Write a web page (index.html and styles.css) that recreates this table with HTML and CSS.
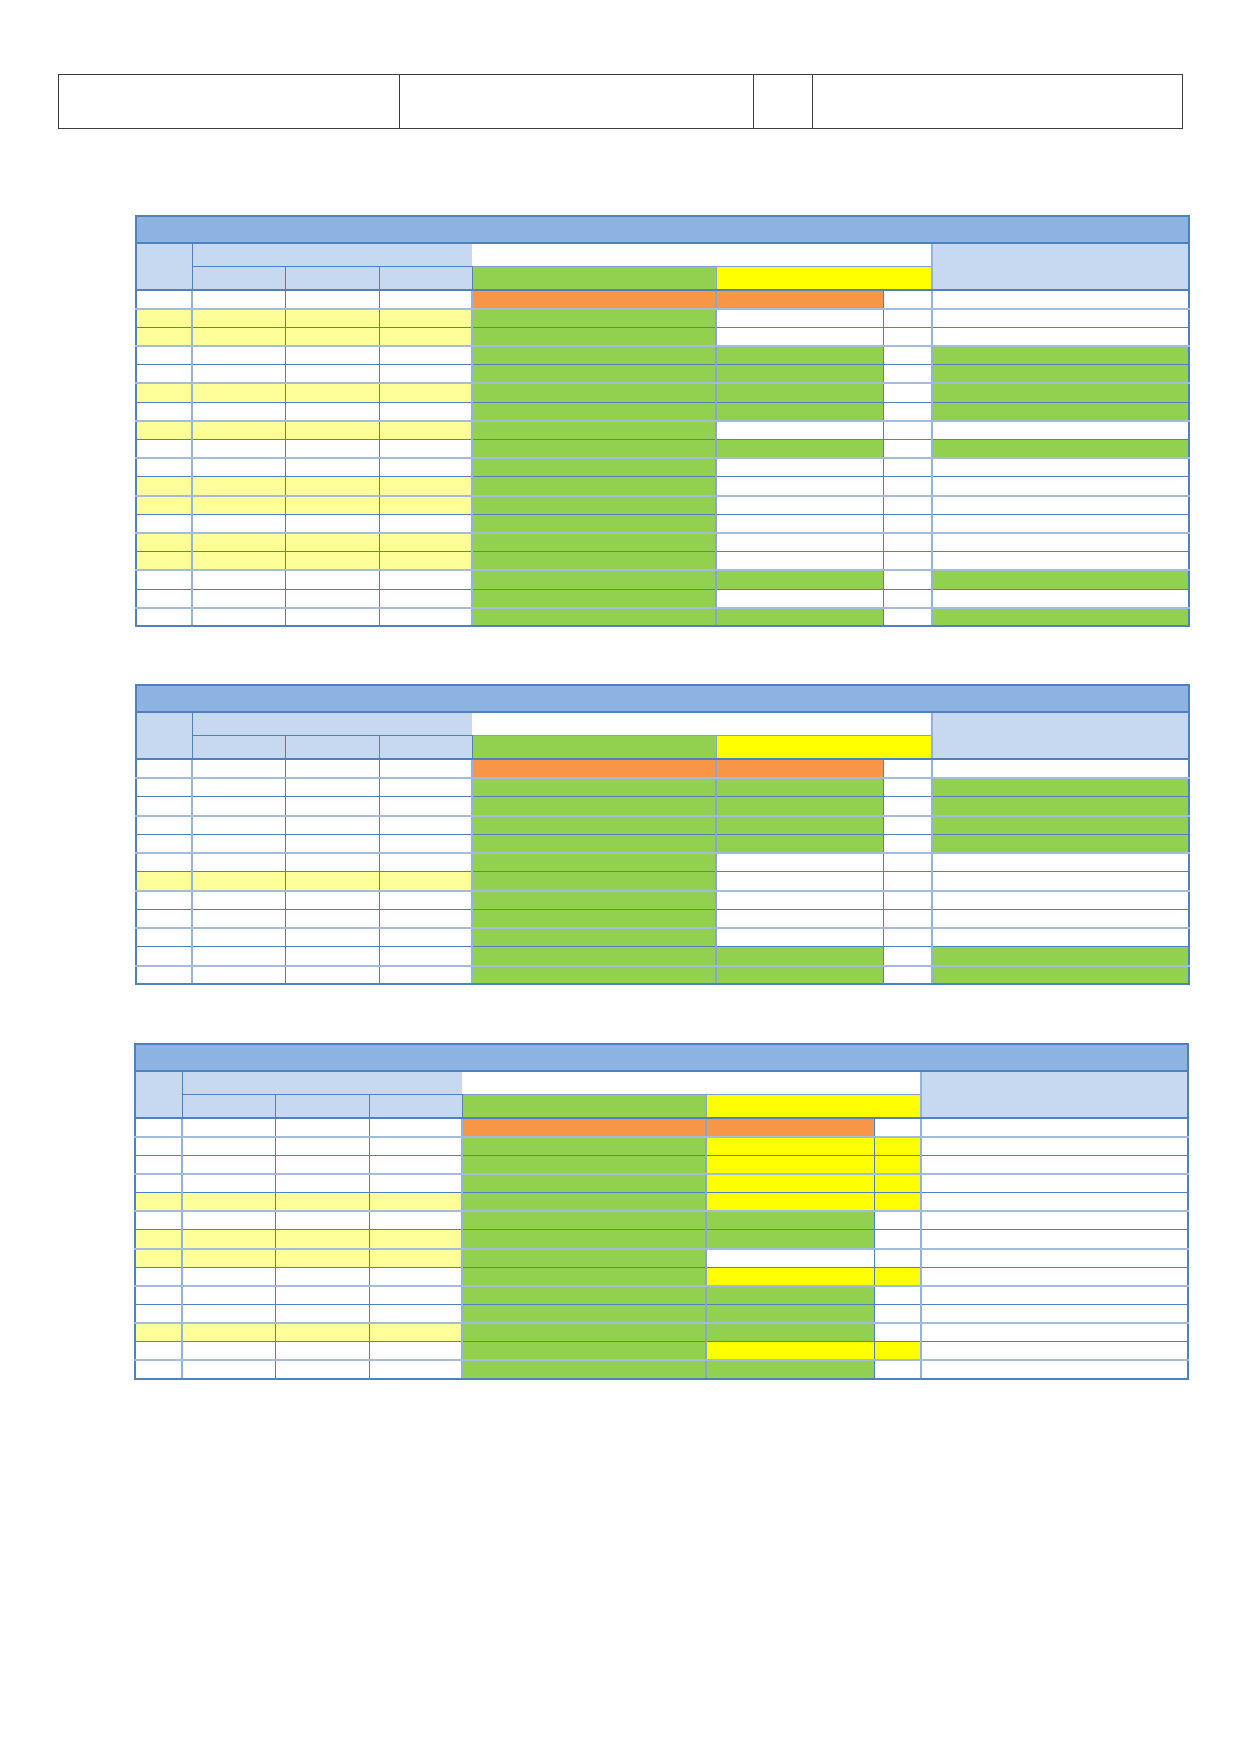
FILE: index.html
```html
<!DOCTYPE html>
<html lang="en">
<head>
<meta charset="utf-8">
<title>Schedule</title>
<link rel="stylesheet" href="styles.css">
</head>
<body>
<div class="page">
  <table class="doc-head">
    <colgroup><col class="d1"><col class="d2"><col class="d3"><col class="d4"></colgroup>
    <tr><td></td><td></td><td></td><td></td></tr>
  </table>

  <table class="grid t1">
    <colgroup><col class="a1"><col class="a2"><col class="a3"><col class="a4"><col class="a5"><col class="a6"><col class="a7"><col class="a8"></colgroup>
    <thead>
      <tr class="title"><th colspan="8"></th></tr>
      <tr class="hr1"><th rowspan="2" class="lb first"></th><th colspan="3" class="lb grp"></th><th colspan="3" class="wh"></th><th rowspan="2" class="lb last"></th></tr>
      <tr class="hr2"><th class="lb sub"></th><th class="lb sub"></th><th class="lb sub"></th><th class="gr"></th><th colspan="2" class="ye"></th></tr>
    </thead>
    <tbody>
      <tr><td></td><td></td><td></td><td></td><td class="or"></td><td class="or"></td><td></td><td></td></tr>
      <tr class="ly"><td></td><td></td><td></td><td></td><td class="gr"></td><td></td><td></td><td></td></tr>
      <tr class="ly"><td></td><td></td><td></td><td></td><td class="gr"></td><td></td><td></td><td></td></tr>
      <tr><td></td><td></td><td></td><td></td><td class="gr"></td><td class="gr"></td><td></td><td class="gr"></td></tr>
      <tr><td></td><td></td><td></td><td></td><td class="gr"></td><td class="gr"></td><td></td><td class="gr"></td></tr>
      <tr class="ly"><td></td><td></td><td></td><td></td><td class="gr"></td><td class="gr"></td><td></td><td class="gr"></td></tr>
      <tr><td></td><td></td><td></td><td></td><td class="gr"></td><td class="gr"></td><td></td><td class="gr"></td></tr>
      <tr class="ly"><td></td><td></td><td></td><td></td><td class="gr"></td><td></td><td></td><td></td></tr>
      <tr><td></td><td></td><td></td><td></td><td class="gr"></td><td class="gr"></td><td></td><td class="gr"></td></tr>
      <tr><td></td><td></td><td></td><td></td><td class="gr"></td><td></td><td></td><td></td></tr>
      <tr class="ly"><td></td><td></td><td></td><td></td><td class="gr"></td><td></td><td></td><td></td></tr>
      <tr class="ly"><td></td><td></td><td></td><td></td><td class="gr"></td><td></td><td></td><td></td></tr>
      <tr><td></td><td></td><td></td><td></td><td class="gr"></td><td></td><td></td><td></td></tr>
      <tr class="ly"><td></td><td></td><td></td><td></td><td class="gr"></td><td></td><td></td><td></td></tr>
      <tr class="ly"><td></td><td></td><td></td><td></td><td class="gr"></td><td></td><td></td><td></td></tr>
      <tr><td></td><td></td><td></td><td></td><td class="gr"></td><td class="gr"></td><td></td><td class="gr"></td></tr>
      <tr><td></td><td></td><td></td><td></td><td class="gr"></td><td></td><td></td><td></td></tr>
      <tr><td></td><td></td><td></td><td></td><td class="gr"></td><td class="gr"></td><td></td><td class="gr"></td></tr>
    </tbody>
  </table>

  <table class="grid t2">
    <colgroup><col class="a1"><col class="a2"><col class="a3"><col class="a4"><col class="a5"><col class="a6"><col class="a7"><col class="a8"></colgroup>
    <thead>
      <tr class="title"><th colspan="8"></th></tr>
      <tr class="hr1"><th rowspan="2" class="lb first"></th><th colspan="3" class="lb grp"></th><th colspan="3" class="wh"></th><th rowspan="2" class="lb last"></th></tr>
      <tr class="hr2"><th class="lb sub"></th><th class="lb sub"></th><th class="lb sub"></th><th class="gr"></th><th colspan="2" class="ye"></th></tr>
    </thead>
    <tbody>
      <tr><td></td><td></td><td></td><td></td><td class="or"></td><td class="or"></td><td></td><td></td></tr>
      <tr><td></td><td></td><td></td><td></td><td class="gr"></td><td class="gr"></td><td></td><td class="gr"></td></tr>
      <tr><td></td><td></td><td></td><td></td><td class="gr"></td><td class="gr"></td><td></td><td class="gr"></td></tr>
      <tr><td></td><td></td><td></td><td></td><td class="gr"></td><td class="gr"></td><td></td><td class="gr"></td></tr>
      <tr><td></td><td></td><td></td><td></td><td class="gr"></td><td class="gr"></td><td></td><td class="gr"></td></tr>
      <tr><td></td><td></td><td></td><td></td><td class="gr"></td><td></td><td></td><td></td></tr>
      <tr class="ly"><td></td><td></td><td></td><td></td><td class="gr"></td><td></td><td></td><td></td></tr>
      <tr><td></td><td></td><td></td><td></td><td class="gr"></td><td></td><td></td><td></td></tr>
      <tr><td></td><td></td><td></td><td></td><td class="gr"></td><td></td><td></td><td></td></tr>
      <tr><td></td><td></td><td></td><td></td><td class="gr"></td><td></td><td></td><td></td></tr>
      <tr><td></td><td></td><td></td><td></td><td class="gr"></td><td class="gr"></td><td></td><td class="gr"></td></tr>
      <tr><td></td><td></td><td></td><td></td><td class="gr"></td><td class="gr"></td><td></td><td class="gr"></td></tr>
    </tbody>
  </table>

  <table class="grid t3">
    <colgroup><col class="b1"><col class="b2"><col class="b3"><col class="b4"><col class="b5"><col class="b6"><col class="b7"><col class="b8"></colgroup>
    <thead>
      <tr class="title"><th colspan="8"></th></tr>
      <tr class="hr1"><th rowspan="2" class="lb first"></th><th colspan="3" class="lb grp"></th><th colspan="3" class="wh"></th><th rowspan="2" class="lb last"></th></tr>
      <tr class="hr2"><th class="lb sub"></th><th class="lb sub"></th><th class="lb sub"></th><th class="gr"></th><th colspan="2" class="ye"></th></tr>
    </thead>
    <tbody>
      <tr><td></td><td></td><td></td><td></td><td class="or"></td><td class="or"></td><td></td><td></td></tr>
      <tr><td></td><td></td><td></td><td></td><td class="gr"></td><td class="ye"></td><td class="ye"></td><td></td></tr>
      <tr><td></td><td></td><td></td><td></td><td class="gr"></td><td class="ye"></td><td class="ye"></td><td></td></tr>
      <tr><td></td><td></td><td></td><td></td><td class="gr"></td><td class="ye"></td><td class="ye"></td><td></td></tr>
      <tr class="ly"><td></td><td></td><td></td><td></td><td class="gr"></td><td class="ye"></td><td class="ye"></td><td></td></tr>
      <tr><td></td><td></td><td></td><td></td><td class="gr"></td><td class="gr"></td><td></td><td></td></tr>
      <tr class="ly"><td></td><td></td><td></td><td></td><td class="gr"></td><td class="gr"></td><td></td><td></td></tr>
      <tr class="ly"><td></td><td></td><td></td><td></td><td class="gr"></td><td></td><td></td><td></td></tr>
      <tr><td></td><td></td><td></td><td></td><td class="gr"></td><td class="ye"></td><td class="ye"></td><td></td></tr>
      <tr><td></td><td></td><td></td><td></td><td class="gr"></td><td class="gr"></td><td></td><td></td></tr>
      <tr><td></td><td></td><td></td><td></td><td class="gr"></td><td class="gr"></td><td></td><td></td></tr>
      <tr class="ly"><td></td><td></td><td></td><td></td><td class="gr"></td><td class="gr"></td><td></td><td></td></tr>
      <tr><td></td><td></td><td></td><td></td><td class="gr"></td><td class="ye"></td><td class="ye"></td><td></td></tr>
      <tr><td></td><td></td><td></td><td></td><td class="gr"></td><td class="gr"></td><td></td><td></td></tr>
    </tbody>
  </table>
</div>
</body>
</html>
```

FILE: styles.css
```css
html, body {
  margin: 0;
  padding: 0;
  background: #ffffff;
  font-family: "Liberation Sans", Arial, sans-serif;
}

.page {
  display: flex;
  flex-direction: column;
  align-items: flex-start;
  padding-top: 74px;
  padding-bottom: 120px;
}

/* document header box */
.doc-head {
  margin-left: 58px;
  width: 1124px;
  height: 55px;
  border-collapse: collapse;
  table-layout: fixed;
}
.doc-head td {
  border: 1px solid #3c3c3c;
  padding: 0;
}
.d1 { width: 341px; }
.d2 { width: 354px; }
.d3 { width: 59px; }
.d4 { width: 370px; }

/* coloured schedule grids */
.grid {
  border-collapse: collapse;
  table-layout: fixed;
  width: 1053px;
  border: 2px solid #4f81bd;
}
.grid th,
.grid td {
  padding: 0;
}

.t1 { margin-left: 135px; margin-top: 86px; }
.t2 { margin-left: 135px; margin-top: 57px; }
.t3 { margin-left: 134px; margin-top: 58px; }

.a1 { width: 56px; }
.a2 { width: 93px; }
.a3 { width: 94px; }
.a4 { width: 93px; }
.a5 { width: 244px; }
.a6 { width: 167px; }
.a7 { width: 49px; }
.a8 { width: 257px; }

.b1 { width: 47px; }
.b2 { width: 93px; }
.b3 { width: 94px; }
.b4 { width: 93px; }
.b5 { width: 244px; }
.b6 { width: 168px; }
.b7 { width: 47px; }
.b8 { width: 267px; }

/* header rows */
.grid .title th {
  height: 25px;
  background: #8db3e2;
  border-bottom: 2px solid #4f81bd;
}
.grid .hr1 th { height: 22px; }
.grid .hr2 th {
  height: 22px;
  border-bottom: 2px solid #4f81bd;
}
.grid th.lb { background: #c6d9f1; }
.grid th.wh { background: #ffffff; }
.grid th.gr { background: #92d050; }
.grid th.ye { background: #ffff00; }

.grid th.first { border-right: 1px solid #4f81bd; border-bottom: 2px solid #4f81bd; }
.grid th.grp { border-bottom: 1px solid #4f81bd; }
.grid th.sub { border-right: 1px solid #4f81bd; }
.grid th.gr { border-top: 1px solid #7f9fcf; border-right: 1px solid #8aa6cc; }
.grid th.ye { border-top: 1px solid #7f9fcf; }
.grid th.last { border-left: 2px solid #95b3d7; border-bottom: 2px solid #4f81bd; }

/* body rows */
.grid tbody tr { height: 18.7px; }
.t2 tbody tr { height: 18.75px; }
.t3 tbody tr { height: 18.6px; }

.grid tbody td {
  background: #ffffff;
  border-bottom: 1px solid #4f81bd;
}
.grid tbody tr:nth-child(odd) td {
  border-bottom: 2px solid #a3bcdc;
}
.grid tbody tr:last-child td {
  border-bottom: 2px solid #4f81bd;
}
.grid tbody td:nth-child(1) { border-right: 2px solid #95b3d7; }
.grid tbody td:nth-child(2) { border-right: 1px solid #4f81bd; }
.grid tbody td:nth-child(3) { border-right: 1px solid #4f81bd; }
.grid tbody td:nth-child(4) { border-right: 2px solid #95b3d7; }
.grid tbody td:nth-child(5) { border-right: 2px solid #8aa6cc; }
.grid tbody td:nth-child(6) { border-right: 1px solid #4f81bd; }
.grid tbody td:nth-child(7) { border-right: 2px solid #95b3d7; }

.grid tbody tr.ly td:nth-child(-n+4) { background: #ffff99; }
.grid tbody td.gr { background: #92d050; }
.grid tbody td.or { background: #f79646; }
.grid tbody td.ye { background: #ffff00; }
```
